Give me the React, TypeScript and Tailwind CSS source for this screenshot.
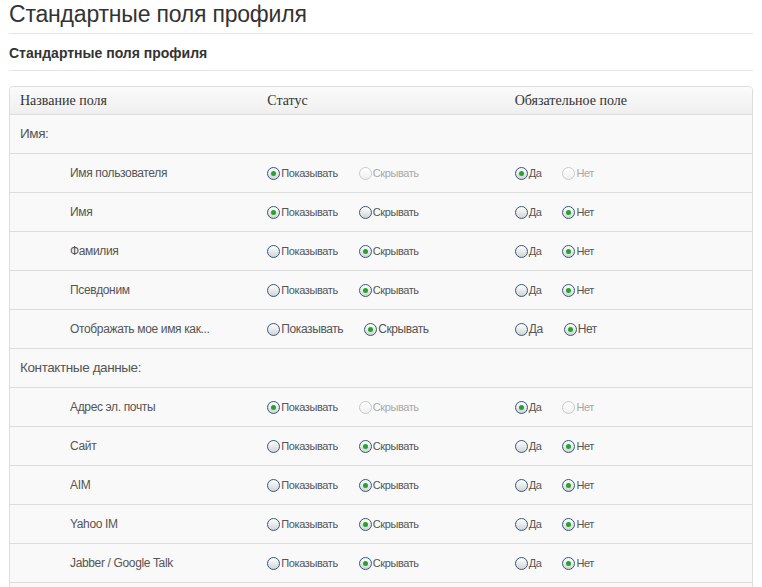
import React from "react";

type St = "on" | "off" | "dis";

function Radio({ s }: { s: St }) {
  if (s === "dis") {
    return (
      <span className="inline-block w-[13px] h-[13px] rounded-full border border-[#c9c9c9] bg-gradient-to-b from-[#ffffff] to-[#f0f0f0] shrink-0" />
    );
  }
  return (
    <span className="relative inline-flex items-center justify-center w-[13px] h-[13px] rounded-full border border-[#34577f] bg-gradient-to-b from-[#ffffff] to-[#d4d4d4] shrink-0">
      {s === "on" && <span className="block w-[5px] h-[5px] rounded-full bg-[#22a52a]" />}
    </span>
  );
}

function Opt({ s, label, big, last }: { s: St; label: string; big?: boolean; last?: boolean }) {
  return (
    <span className={`inline-flex items-center ${last ? "" : "mr-[21px]"}`}>
      <Radio s={s} />
      <span
        className={`ml-px tracking-[-0.4px] ${big ? "text-[12px]" : "text-[11px]"} ${s === "dis" ? "text-[#a8a8a8]" : "text-[#555555]"}`}
      >
        {label}
      </span>
    </span>
  );
}

type Row = { name: string; show: St; hide: St; yes: St; no: St; big?: boolean };

const sections: { title: string; rows: Row[] }[] = [
  {
    title: "Имя:",
    rows: [
      { name: "Имя пользователя", show: "on", hide: "dis", yes: "on", no: "dis" },
      { name: "Имя", show: "on", hide: "off", yes: "off", no: "on" },
      { name: "Фамилия", show: "off", hide: "on", yes: "off", no: "on" },
      { name: "Псевдоним", show: "off", hide: "on", yes: "off", no: "on" },
      { name: "Отображать мое имя как...", show: "off", hide: "on", yes: "off", no: "on", big: true },
    ],
  },
  {
    title: "Контактные данные:",
    rows: [
      { name: "Адрес эл. почты", show: "on", hide: "dis", yes: "on", no: "dis" },
      { name: "Сайт", show: "off", hide: "on", yes: "off", no: "on" },
      { name: "AIM", show: "off", hide: "on", yes: "off", no: "on" },
      { name: "Yahoo IM", show: "off", hide: "on", yes: "off", no: "on" },
      { name: "Jabber / Google Talk", show: "off", hide: "on", yes: "off", no: "on" },
      { name: "ICQ", show: "off", hide: "on", yes: "off", no: "on" },
      { name: "Skype", show: "off", hide: "on", yes: "off", no: "on" },
    ],
  },
];

export default function App() {
  return (
    <div className="bg-white min-h-screen px-[9px] font-['Liberation_Sans',Arial,sans-serif] text-[#333333]">
      <h1 className="h-[34px] leading-[29px] text-[23px] tracking-[-0.2px] font-normal text-[#333333] border-b border-[#e5e5e5]">
        Стандартные поля профиля
      </h1>
      <h2 className="h-[37px] pt-[10px] leading-[18px] text-[14px] font-bold text-[#333333] border-b border-[#e5e5e5]">
        Стандартные поля профиля
      </h2>
      <div className="mt-[15px] border border-[#dddddd] rounded-t-[4px] bg-[#f9f9f9] overflow-hidden">
        <div className="grid grid-cols-3 h-[28px] items-center border-b border-[#dddddd] bg-gradient-to-b from-[#fbfbfb] to-[#efefef] font-['Liberation_Serif','Times_New_Roman',serif] text-[14px] text-[#333333]">
          <div className="pl-[10px]">Название поля</div>
          <div className="pl-[10px]">Статус</div>
          <div className="pl-[10px]">Обязательное поле</div>
        </div>
        {sections.map((sec) => (
          <div key={sec.title}>
            <div className="h-[39px] flex items-center pl-[10px] border-b border-[#dddddd] text-[13.5px] tracking-[-0.4px] text-[#555555]">
              {sec.title}
            </div>
            {sec.rows.map((r) => (
              <div key={r.name} className="grid grid-cols-3 h-[39px] items-center border-b border-[#dddddd]">
                <div className="pl-[60px] text-[12px] tracking-[-0.35px] text-[#555555]">{r.name}</div>
                <div className="pl-[10px] flex items-center">
                  <Opt s={r.show} label="Показывать" big={r.big} />
                  <Opt s={r.hide} label="Скрывать" big={r.big} last />
                </div>
                <div className="pl-[10px] flex items-center">
                  <Opt s={r.yes} label="Да" big={r.big} />
                  <Opt s={r.no} label="Нет" big={r.big} last />
                </div>
              </div>
            ))}
          </div>
        ))}
      </div>
    </div>
  );
}
